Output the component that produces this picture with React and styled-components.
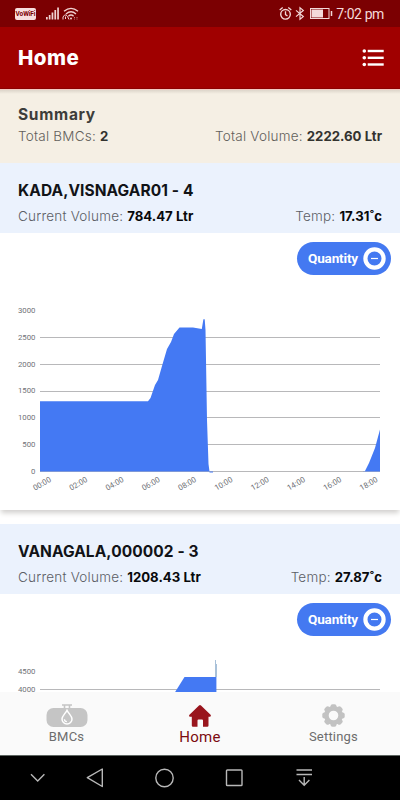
import styled, { createGlobalStyle } from "styled-components";

const GlobalStyle = createGlobalStyle`
  * { box-sizing: border-box; }
  body { margin: 0; background: #fff; }
`;

const Screen = styled.div`
  width: 400px;
  height: 800px;
  display: flex;
  flex-direction: column;
  overflow: hidden;
  background: #fff;
  font-family: Inter, "Liberation Sans", sans-serif;
`;

const StatusBar = styled.div`
  height: 27px;
  flex: none;
  padding: 0 16px 0 15px;
  display: flex;
  align-items: center;
  justify-content: space-between;
  background: #7b0002;
`;

const StatusGroup = styled.div`
  height: 27px;
  display: flex;
  align-items: center;
`;

const VoWifi = styled.span`
  width: 21px;
  height: 12px;
  margin-right: 10px;
  border-radius: 2px;
  background: #f7dede;
  color: #7b0002;
  font: 700 6.5px/12px Roboto, sans-serif;
  letter-spacing: -.1px;
  text-align: center;
`;

const Clock = styled.span`
  margin-left: 3px;
  color: #f3d9d9;
  font: 400 14px/28px Roboto, sans-serif;
  letter-spacing: -.4px;
`;

const Header = styled.header`
  height: 62px;
  flex: none;
  padding: 0 16px 0 18px;
  display: flex;
  align-items: center;
  justify-content: space-between;
  background: #a00000;
  border-bottom: 1px solid #8b0000;
`;

const Title = styled.h1`
  margin: 0;
  color: #fff;
  font-size: 20.5px;
  line-height: 24px;
  font-weight: 800;
  letter-spacing: .45px;
`;

const Content = styled.main`
  flex: 1;
  min-height: 0;
  overflow: hidden;
`;

const Summary = styled.section`
  height: 74px;
  padding: 15px 18px 0;
  background: linear-gradient(#ddd5ca, #f5efe4 4px);
  border-top: 1px solid #f3c9c1;
`;

const SummaryTitle = styled.h2`
  margin: 0;
  color: #3d3d3a;
  font-size: 15.5px;
  line-height: 20px;
  font-weight: 700;
  letter-spacing: .7px;
`;

const Row = styled.div`
  display: flex;
  justify-content: space-between;
  line-height: 20px;
  padding-top: ${(p) => p.$top || 0}px;
`;

const Label = styled.span`
  color: ${(p) => p.$color || "#5b5e66"};
  font-size: 13.5px;
  font-weight: 300;
  letter-spacing: .22px;
  white-space: pre;
`;

const Value = styled.b`
  color: ${(p) => p.$color || "#08090b"};
  font-size: 13.2px;
  font-weight: 700;
`;

const Card = styled.section`
  height: 347px;
  margin-bottom: 14px;
  background: #fff;
  box-shadow: 0 4px 5px -1px #d2d0ce;
`;

const CardHeader = styled.div`
  height: 70px;
  padding: 18px 18px 0;
  background: #ebf2fd;
`;

const CardTitle = styled.h3`
  margin: 0;
  color: #111317;
  font-size: 15.5px;
  line-height: 20px;
  font-weight: 700;
  letter-spacing: ${(p) => p.$spacing}px;
`;

const ButtonRow = styled.div`
  height: 43px;
  padding: 9px 9px 0 0;
  display: flex;
  justify-content: flex-end;
`;

const QuantityButton = styled.button`
  width: 94px;
  height: 33px;
  padding: 0 5px 0 11px;
  border: 0;
  border-radius: 17px;
  display: flex;
  align-items: center;
  justify-content: space-between;
  background: #4479f1;
  color: #fff;
  font: 700 13.5px/33px Roboto, sans-serif;
  letter-spacing: -.15px;
`;

const ChartSvg = styled.svg`
  display: block;
  text {
    fill: #707277;
    font: 400 7.8px Roboto, sans-serif;
  }
`;

const TabBar = styled.nav`
  height: 63px;
  flex: none;
  display: grid;
  grid-template-columns: 133px 134px 133px;
  background: #fafafa;
`;

const Tab = styled.div`
  padding-top: 12px;
  display: flex;
  flex-direction: column;
  align-items: center;
  color: ${(p) => (p.$active ? "#7c0b10" : "#6d6d6d")};
  font: 400 ${(p) => (p.$active ? 15 : 13)}px/18px Roboto, sans-serif;
  letter-spacing: ${(p) => (p.$active ? .3 : .2)}px;
  svg { flex: none; }
  span { padding-top: 1px; }
`;

const NavBar = styled.div`
  height: 45px;
  flex: none;
  background: #000;
  border-top: 1px solid #5c6460;
`;

const SignalIcon = () => (
  <svg width="14" height="13" viewBox="0 0 14 13" fill="#f0d2d2">
    <rect x="0" y="10" width="1.7" height="2.5" />
    <rect x="2.8" y="8" width="1.7" height="4.5" />
    <rect x="5.6" y="5.5" width="1.7" height="7" />
    <rect x="8.4" y="3" width="1.7" height="9.5" />
    <rect x="11.2" y=".5" width="1.7" height="12" />
  </svg>
);

const WifiIcon = () => (
  <svg width="20" height="14" viewBox="-2 0 20 14" fill="none" stroke="#f0d2d2" strokeWidth="1.4">
    <path d="M2 4.200Q9-1.500 16 4.200M4 7Q9 2.500 14 7M6.400 9.200Q9 7 11.600 9.200" />
    <path d="M1 12.500V10Q4 4.500 7 12.500M3.500 12V9.500" strokeWidth="1" />
    <circle cx="9" cy="11.4" r="1" fill="#f0d2d2" stroke="none" />
    <path d="M12.500 10v2.500M15 10v2.500" strokeWidth="1" strokeDasharray="1 .6" opacity=".6" />
  </svg>
);

const StatusIcons = () => (
  <svg width="54" height="15" viewBox="0 0 54 15" fill="none" stroke="#f3d9d9">
    <circle cx="6.5" cy="8.3" r="4.8" strokeWidth="1.4" />
    <path d="M6.500 5.200V8.600L8.500 10M.700 4L3.700 1.500M12.300 4L9.300 1.500" strokeWidth="1.3" />
    <path d="M17 4.400L24.300 10.600L21 13.300V1.700L24.300 4.400L17 10.600" strokeWidth="1.2" />
    <rect x="31.5" y="2.5" width="18.5" height="10" strokeWidth="1" />
    <rect x="32.5" y="3.5" width="11.5" height="8" fill="#f3d9d9" stroke="none" />
    <path d="M52.500 5v5" strokeWidth="1.5" />
  </svg>
);

const ListIcon = () => (
  <svg width="22" height="18" viewBox="0 0 22 18" fill="#fff">
    {[2, 8.8, 15.5].map((y) => (
      <g key={y}>
        <circle cx="2.3" cy={y} r="1.8" />
        <rect x="5.7" y={y - 1.2} width="16" height="2.4" />
      </g>
    ))}
  </svg>
);

const MinusIcon = () => (
  <svg width="23" height="23" viewBox="0 0 23 23">
    <circle cx="11.5" cy="11.5" r="9.1" fill="none" stroke="#fff" strokeWidth="4.2" />
    <path d="M8 11.5h7" stroke="#fff" strokeWidth="1.2" />
  </svg>
);

const TankIcon = () => (
  <svg width="42" height="23" viewBox="0 0 42 23">
    <path d="M16 1h10M18.5 1v4M23.5 1v4" stroke="#c5c5c5" strokeWidth="1.6" />
    <rect x=".5" y="4" width="41" height="19" rx="7" fill="#c5c5c5" />
    <path d="M21 6.200C19.500 9.500 16 12 16 15a5 5 0 0 0 10 0C26 12 22.500 9.500 21 6.200Z" fill="#c5c5c5" stroke="#fff" strokeWidth="1.5" />
    <path d="M18.400 15.300a2.500 2.500 0 0 0 2.500 2.400" fill="none" stroke="#fff" strokeWidth="1.3" />
  </svg>
);

const HomeIcon = () => (
  <svg width="24" height="23" viewBox="0 0 24 23" fill="#99151d">
    <path d="M11 1.400Q12 .500 13 1.400L22.800 11Q23.400 12.800 21.800 12.800H20.500V21.500Q20.500 22.700 19.300 22.700H15V16.500Q15 15.600 14 15.600H10.500Q9.500 15.600 9.500 16.500V22.700H5Q3.800 22.700 3.800 21.500V12.800H2Q.500 12.700 1.200 11Z" />
  </svg>
);

const GearIcon = () => (
  <svg width="23" height="23" viewBox="0 0 23 23" fill="#c2c2c2">
    <circle cx="11.5" cy="11.5" r="7.1" fill="none" stroke="#c2c2c2" strokeWidth="4.6" />
    {[0, 45, 90, 135, 180, 225, 270, 315].map((a) => (
      <rect key={a} x="8.5" y=".3" width="6" height="5" rx="2" transform={`rotate(${a} 11.5 11.5)`} />
    ))}
  </svg>
);

const NavIcons = () => (
  <svg width="400" height="44" viewBox="0 756 400 44" fill="none" stroke="#b8b8b8" strokeWidth="1.4">
    <path d="M31 774.300L37.700 781L44.400 774.300" />
    <path d="M102.300 769V786.500L87.300 777.700Z" strokeLinejoin="round" />
    <circle cx="164.5" cy="778" r="8.7" />
    <rect x="226.5" y="770" width="15.5" height="15.5" rx=".8" />
    <path d="M296.500 770h15.500M296.500 774.500h15.500M304.200 777v8M299 780l5.200 5.200L309.400 780" />
  </svg>
);

const hours = ["00:00", "02:00", "04:00", "06:00", "08:00", "10:00", "12:00", "14:00", "16:00", "18:00"];

// chart box starts at the bottom edge of the button row
const Chart = ({ max, lines, step, area, spike, labels = [] }) => (
  <ChartSvg width="400" height="234" viewBox="0 0 400 234">
    {Array.from({ length: lines + 1 }, (_, i) => {
      const y = 34.6 + i * step;
      return (
        <g key={i}>
          {i > 0 && <path d={`M40 ${Math.floor(y) + 0.5}H380`} stroke="#b8b8ba" />}
          <text x="35.5" y={y + 2.3} textAnchor="end">{max - i * 500}</text>
        </g>
      );
    })}
    <path d={area} fill="#4479f3" />
    {spike && <path d={spike} fill="none" stroke="#a9c1d9" strokeWidth="1" />}
    {labels.map((h, i) => (
      <text key={h} textAnchor="middle" transform={`translate(${43.3 + i * 36.3} 210) rotate(-30)`}>{h}</text>
    ))}
  </ChartSvg>
);

const Bmc = ({ name, spacing, volume, temp, chart }) => (
  <Card>
    <CardHeader>
      <CardTitle $spacing={spacing}>{name}</CardTitle>
      <Row $top={4}>
        <div><Label>Current Volume: </Label><Value>{volume} Ltr</Value></div>
        <div><Label>Temp: </Label><Value>{temp}˚c</Value></div>
      </Row>
    </CardHeader>
    <ButtonRow>
      <QuantityButton>Quantity<MinusIcon /></QuantityButton>
    </ButtonRow>
    <Chart {...chart} />
  </Card>
);

const kada = {
  max: 3000,
  lines: 6,
  step: 26.8,
  labels: hours,
  area: "M40 125.300H148L150.500 122L155 109L158 104L162 90L167 73L171 66L174 58L179.500 51.500H193L201.800 53L203.400 43.300H204.700L205.500 54L207 144L208.500 188L209.500 195.500H213V196.500H209.500V195.500H40ZM363 196L365 195L369 187L375 172L380 153.500V195.500H363Z",
};

const vanagala = {
  max: 4500,
  lines: 1,
  step: 17.8,
  area: "M160 79L174.500 56L184.500 40H216.400V196H160Z",
  spike: "M215.500 23V40M216.500 27V40",
};

export default function App() {
  return (
    <Screen>
      <GlobalStyle />
      <StatusBar>
        <StatusGroup>
          <VoWifi>VoWiFi</VoWifi>
          <SignalIcon />
          <WifiIcon />
        </StatusGroup>
        <StatusGroup>
          <StatusIcons />
          <Clock>7:02 pm</Clock>
        </StatusGroup>
      </StatusBar>
      <Header>
        <Title>Home</Title>
        <ListIcon />
      </Header>
      <Content>
        <Summary>
          <SummaryTitle>Summary</SummaryTitle>
          <Row>
            <div><Label $color="#62605b">Total BMCs: </Label><Value $color="#33332f">2</Value></div>
            <div><Label $color="#62605b">Total Volume: </Label><Value $color="#33332f">2222.60 Ltr</Value></div>
          </Row>
        </Summary>
        <Bmc name="KADA,VISNAGAR01 - 4" spacing={0.08} volume="784.47" temp="17.31" chart={kada} />
        <Bmc name="VANAGALA,000002 - 3" spacing={0.08} volume="1208.43" temp="27.87" chart={vanagala} />
      </Content>
      <TabBar>
        <Tab><TankIcon /><span>BMCs</span></Tab>
        <Tab $active><HomeIcon /><span>Home</span></Tab>
        <Tab><GearIcon /><span>Settings</span></Tab>
      </TabBar>
      <NavBar>
        <NavIcons />
      </NavBar>
    </Screen>
  );
}
